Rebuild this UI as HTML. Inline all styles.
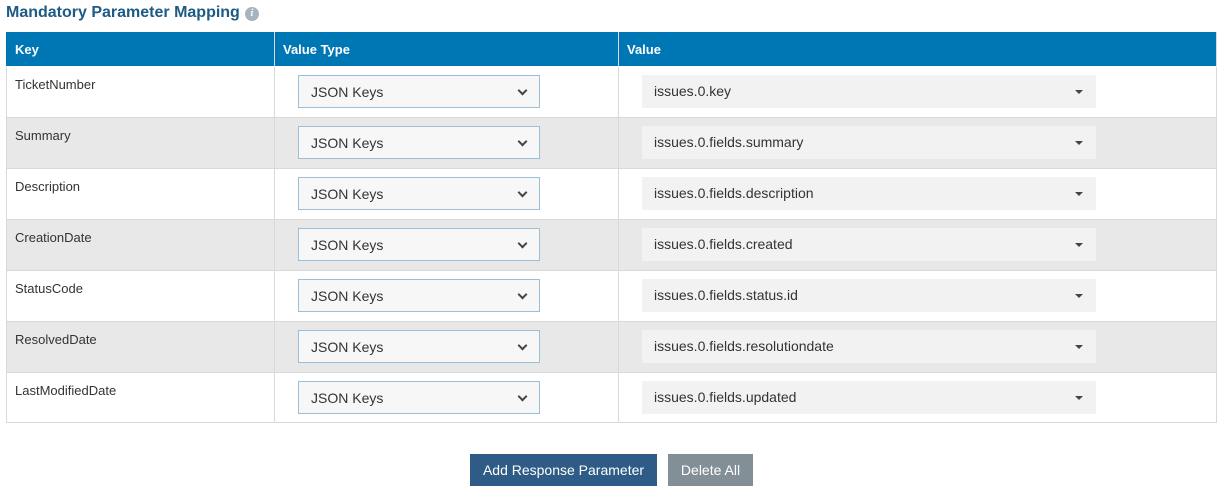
<!DOCTYPE html>
<html><head><style>
*{box-sizing:border-box;margin:0;padding:0}
body{width:1223px;height:494px;background:#fff;font-family:"Liberation Sans",Arial,sans-serif;position:relative;overflow:hidden}
.t{position:absolute;left:6px;top:4px;font-size:16px;font-weight:bold;color:#1d5a85}
.i{display:inline-block;width:14px;height:14px;border-radius:50%;background:#a7b4c0;color:#fff;font-size:10px;text-align:center;line-height:14px;vertical-align:1px;margin-left:5px;font-style:italic;font-family:"Liberation Serif",serif}
.hd{position:absolute;left:6px;top:32px;width:1211px;height:34px;background:#0077b5;color:#fff;font-weight:bold;font-size:13px}
.hd span{position:absolute;top:10px}
.r{position:absolute;left:6px;width:1211px;height:51px;border:1px solid #d9d9d9;border-top:none;font-size:13px;color:#333}
.r.g{background:#e8e8e8}
.k{position:absolute;left:8px;top:10px}
.c1,.c2{position:absolute;top:0;bottom:0;width:1px;background:#d9d9d9}
.c1{left:267px}.c2{left:611px}
.s{position:absolute;left:291px;top:8px;width:242px;height:33px;background:#f7f7f7;border:1px solid #9bbfd6;font-size:14px;padding:8px 12px;color:#333}
.s:after{content:"";position:absolute;right:13px;top:11px;width:5px;height:5px;border-right:2px solid #444;border-bottom:2px solid #444;transform:rotate(45deg)}
.v{position:absolute;left:635px;top:8px;width:454px;height:33px;background:#f2f2f2;font-size:14px;padding:8px 12px;color:#333}
.v:after{content:"";position:absolute;right:13px;top:15px;border-left:4px solid transparent;border-right:4px solid transparent;border-top:4px solid #444}
.b{position:absolute;top:454px;height:32px;color:#fff;font-size:14px;text-align:center;line-height:32px}
</style></head><body>
<div class="t">Mandatory Parameter Mapping<span class="i">i</span></div>
<div class="hd" style="border-right:1px solid #d9d9d9"><span style="left:9px">Key</span><span style="left:277px">Value Type</span><span style="left:621px">Value</span><div class="c1" style="background:#d9d9d9;left:268px"></div><div class="c2" style="background:#d9d9d9;left:612px"></div></div>
<div class="r" style="top:67px"><div class="k">TicketNumber</div><div class="c1"></div><div class="c2"></div><div class="s">JSON Keys</div><div class="v">issues.0.key</div></div>
<div class="r g" style="top:118px"><div class="k">Summary</div><div class="c1"></div><div class="c2"></div><div class="s">JSON Keys</div><div class="v">issues.0.fields.summary</div></div>
<div class="r" style="top:169px"><div class="k">Description</div><div class="c1"></div><div class="c2"></div><div class="s">JSON Keys</div><div class="v">issues.0.fields.description</div></div>
<div class="r g" style="top:220px"><div class="k">CreationDate</div><div class="c1"></div><div class="c2"></div><div class="s">JSON Keys</div><div class="v">issues.0.fields.created</div></div>
<div class="r" style="top:271px"><div class="k">StatusCode</div><div class="c1"></div><div class="c2"></div><div class="s">JSON Keys</div><div class="v">issues.0.fields.status.id</div></div>
<div class="r g" style="top:322px"><div class="k">ResolvedDate</div><div class="c1"></div><div class="c2"></div><div class="s">JSON Keys</div><div class="v">issues.0.fields.resolutiondate</div></div>
<div class="r" style="top:373px;height:50px"><div class="k">LastModifiedDate</div><div class="c1"></div><div class="c2"></div><div class="s">JSON Keys</div><div class="v">issues.0.fields.updated</div></div>
<div class="b" style="left:470px;width:187px;background:#2f5b87">Add Response Parameter</div>
<div class="b" style="left:668px;width:85px;background:#838f96">Delete All</div>
</body></html>
